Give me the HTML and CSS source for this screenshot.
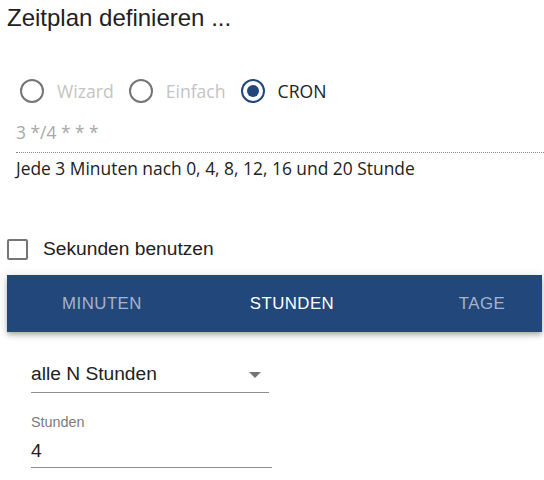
FILE: index.html
```html
<!DOCTYPE html>
<html lang="de">
<head>
    <meta charset="UTF-8">
    <meta name="viewport" content="width=device-width, initial-scale=1.0">
    <title>Zeitplan</title>
    <link rel="stylesheet" href="styles.css">
</head>
<body>
    <h1 class="title">Zeitplan definieren ...</h1>

    <div class="modes">
        <label class="mode disabled"><span class="radio"></span>Wizard</label>
        <label class="mode disabled"><span class="radio"></span>Einfach</label>
        <label class="mode"><span class="radio checked"></span>CRON</label>
    </div>

    <div class="cron-field">3 */4 * * *</div>
    <div class="cron-text">Jede 3 Minuten nach 0, 4, 8, 12, 16 und 20 Stunde</div>

    <label class="seconds"><span class="checkbox"></span>Sekunden benutzen</label>

    <div class="tabs">
        <div class="tab">MINUTEN</div>
        <div class="tab active">STUNDEN</div>
        <div class="tab">TAGE</div>
    </div>

    <div class="select">
        alle N Stunden
        <span class="arrow"></span>
    </div>

    <div class="field">
        <div class="field-label">Stunden</div>
        <div class="field-input">4</div>
    </div>
</body>
</html>
```

FILE: styles.css
```css
body {
    margin: 0;
    padding: 0 0 0 7px;
    font-family: "Liberation Sans", Arial, sans-serif;
    color: #212121;
    background: #fff;
    overflow: hidden;
}

.title {
    margin: 4px 0 0;
    font-size: 24px;
    line-height: 28px;
    font-weight: normal;
}

/* radio group */
.modes {
    display: flex;
    align-items: center;
    gap: 15px;
    height: 28px;
    margin-top: 45px;
    padding-left: 13px;
    font-family: "Open Sans", sans-serif;
    font-size: 17.6px;
}

.mode {
    display: flex;
    align-items: center;
    gap: 13px;
    color: #222;
}

.mode.disabled {
    color: #c4c4c4;
}

.radio {
    width: 20px;
    height: 20px;
    border: 2px solid #757575;
    border-radius: 50%;
    display: flex;
    align-items: center;
    justify-content: center;
}

.radio.checked {
    border-color: #22477a;
}

.radio.checked::after {
    content: "";
    width: 12px;
    height: 12px;
    border-radius: 50%;
    background: #22477a;
}

.cron-field {
    margin: 15px 0 0 9px;
    padding-bottom: 8px;
    border-bottom: 1px dotted #8a8a8a;
    font-family: "Open Sans", sans-serif;
    font-size: 17.4px;
    line-height: 24px;
    color: #a8a8a8;
}

.cron-text {
    margin: 3px 0 0 9px;
    font-family: "Open Sans", sans-serif;
    font-size: 17.4px;
    line-height: 24px;
    color: #222;
}

.seconds {
    display: flex;
    align-items: center;
    height: 28px;
    margin-top: 55px;
    font-size: 19.2px;
}

.checkbox {
    width: 17px;
    height: 17px;
    border: 2px solid #757575;
    border-radius: 2px;
    margin-right: 15px;
}

/* tabs */
.tabs {
    display: flex;
    height: 57px;
    margin: 12px 2px 0 0;
    background: #22477a;
    overflow: hidden;
    box-shadow: 0 2px 4px -1px rgba(0, 0, 0, 0.2), 0 4px 5px 0 rgba(0, 0, 0, 0.14), 0 1px 10px 0 rgba(0, 0, 0, 0.12);
}

.tab {
    flex: none;
    width: 190px;
    display: flex;
    align-items: center;
    justify-content: center;
    font-size: 16.8px;
    letter-spacing: 0.48px;
    color: rgba(255, 255, 255, 0.6);
}

.tab.active {
    color: #fff;
}

/* select + text field */
.select {
    position: relative;
    width: 238px;
    margin: 30px 0 0 24px;
    padding-bottom: 7px;
    border-bottom: 1px solid #8f8f8f;
    font-size: 19.2px;
    line-height: 23px;
}

.arrow {
    position: absolute;
    right: 8px;
    top: 10px;
    border-left: 6px solid transparent;
    border-right: 6px solid transparent;
    border-top: 6px solid #757575;
}

.field {
    width: 241px;
    margin: 21px 0 0 24px;
}

.field-label {
    font-size: 14.4px;
    line-height: 17px;
    color: #7a7a7a;
}

.field-input {
    margin-top: 8px;
    padding-bottom: 5px;
    border-bottom: 1px solid #8f8f8f;
    font-size: 19.2px;
    line-height: 23px;
}
```
